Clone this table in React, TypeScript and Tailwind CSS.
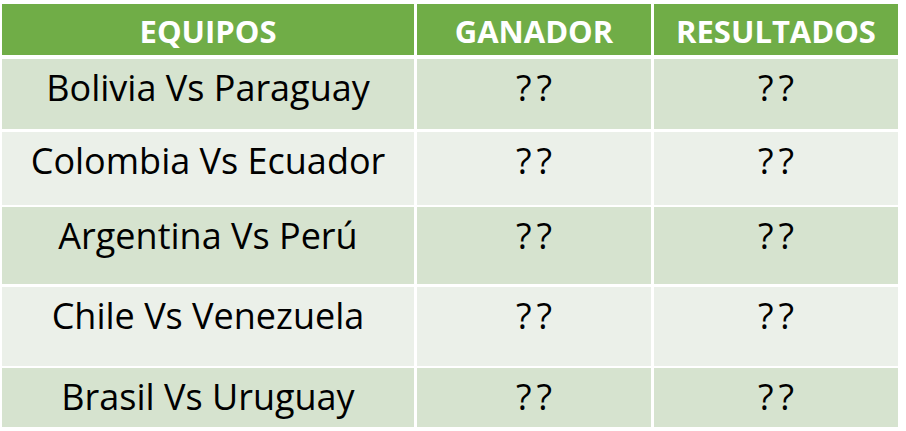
const rows = [
  { equipos: 'Bolivia Vs Paraguay', h: 'h-[70px]', bg: 'bg-[#d6e3cf]' },
  { equipos: 'Colombia Vs Ecuador', h: 'h-[73px]', bg: 'bg-[#ebf0e9]' },
  { equipos: 'Argentina Vs Perú', h: 'h-[77px]', bg: 'bg-[#d6e3cf]' },
  { equipos: 'Chile Vs Venezuela', h: 'h-[79px]', bg: 'bg-[#ebf0e9]' },
  { equipos: 'Brasil Vs Uruguay', h: 'h-[59px]', bg: 'bg-[#d6e3cf]' },
];

const cols = 'grid grid-cols-[412px_234px_244px] gap-x-[3px]';
const cell = 'flex justify-center text-black text-[36px] leading-[38px] pt-[10px] whitespace-nowrap [font-kerning:none]';

export default function App() {
  return (
    <div className="w-[906px] h-[431px] bg-white pt-[4px] pl-[2px] font-['Open_Sans',sans-serif]">
      {/* Header */}
      <div className={`${cols} h-[51px] mb-[4px]`}>
        {['EQUIPOS', 'GANADOR', 'RESULTADOS'].map((t) => (
          <div key={t} className="bg-[#70ad47] flex items-center justify-center text-white font-bold text-[31px] leading-none pt-[3px]">
            {t}
          </div>
        ))}
      </div>

      {/* Rows */}
      <div className="flex flex-col gap-[2.5px]">
        {rows.map((r) => (
          <div key={r.equipos} className={`${cols} ${r.h}`}>
            <div className={`${r.bg} ${cell}`}>{r.equipos}</div>
            <div className={`${r.bg} ${cell} tracking-[5px] pl-[5px]`}>??</div>
            <div className={`${r.bg} ${cell} tracking-[5px] pl-[5px]`}>??</div>
          </div>
        ))}
      </div>
    </div>
  );
}
